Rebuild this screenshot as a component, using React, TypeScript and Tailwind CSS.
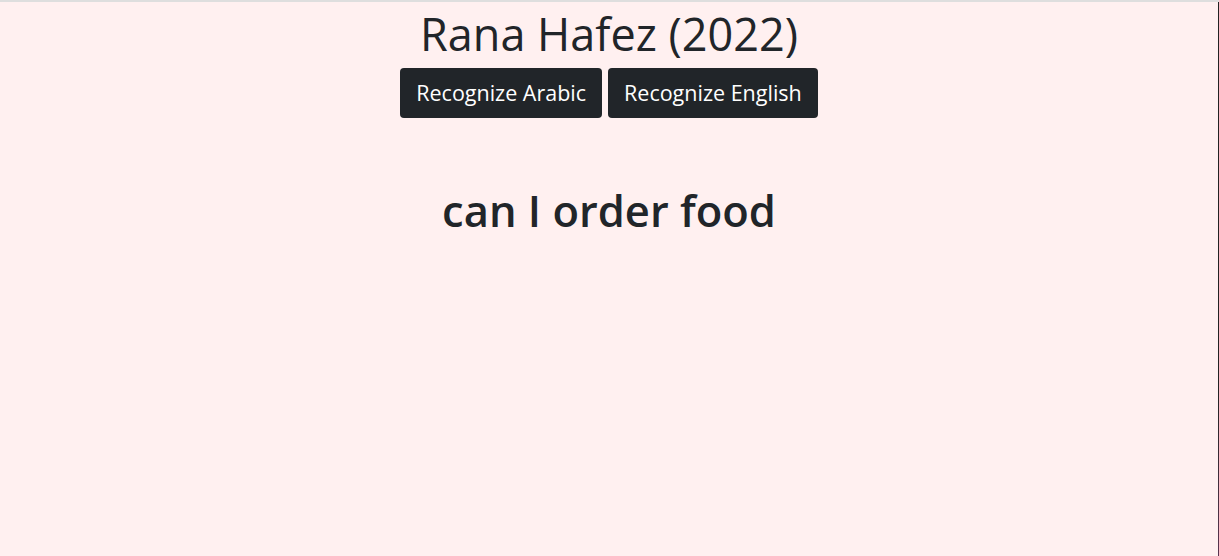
export default function App() {
  return (
    <div
      className="min-h-screen w-full bg-[#fff0f0] border-t-2 border-[#dedede] text-[#212529] flex"
      style={{ fontFamily: '"Open Sans", "Noto Sans", sans-serif' }}
    >
      <div className="flex-1 flex flex-col items-center">
        <h1 className="text-[45px] leading-[60px] font-normal mt-[2px]">Rana Hafez (2022)</h1>
        <div className="flex gap-[6px] mt-[4px]">
          <button className="h-[50px] px-[16px] rounded-[4px] bg-[#212529] text-white text-[21.5px]">
            Recognize Arabic
          </button>
          <button className="h-[50px] px-[16px] rounded-[4px] bg-[#212529] text-white text-[21.5px]">
            Recognize English
          </button>
        </div>
        <h2 className="text-[43.5px] font-semibold leading-[48px] mt-[69px]">can I order food</h2>
      </div>
      <div className="w-px bg-gradient-to-b from-[#222] from-70% to-[#5a3550]" />
    </div>
  );
}
